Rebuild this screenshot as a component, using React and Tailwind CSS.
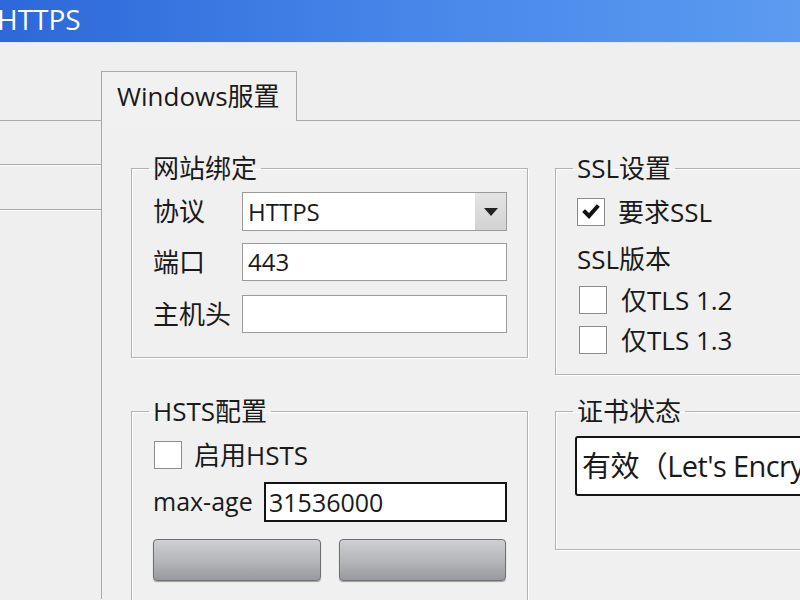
import React from 'react';

const font = { fontFamily: '"Open Sans", "Noto Sans CJK SC", sans-serif' };

function CheckBox({ checked }) {
  return (
    <span className="flex h-[28px] w-[28px] shrink-0 items-center justify-center border border-[#8c8c8c] bg-white">
      {checked && (
        <svg width="22" height="22" viewBox="0 0 22 22">
          <polyline points="5,11 9,15 17,6" fill="none" stroke="#111" strokeWidth="4" strokeLinecap="square" />
        </svg>
      )}
    </span>
  );
}

function Group({ title, className, children }) {
  return (
    <fieldset className={`border border-[#b2b2b2] pl-[21px] pr-[20px] shadow-[inset_1px_1px_0_#fff,1px_1px_0_#fff] ${className}`}>
      <legend className="-ml-[4px] px-[4px] text-[26px] leading-[30px] text-[#1a1a1a]">{title}</legend>
      {children}
    </fieldset>
  );
}

export default function App() {
  return (
    <div className="h-[600px] w-[800px] overflow-hidden bg-[#efefef] text-[#1a1a1a]" style={font}>
      {/* title bar */}
      <div className="flex h-[42px] items-center bg-gradient-to-r from-[#2c68d8] via-[#4785e9] to-[#5c9bf0]">
        <span className="-ml-[3px] -mt-[4px] text-[28px] leading-[36px] text-white">HTTPS</span>
      </div>
      <div className="h-px bg-[#dce8f8]" />

      {/* tab strip */}
      <div className="flex h-[78px] items-end border-b border-[#a9a9a9] pl-[101px]">
        <div className="-mb-px h-[50px] w-[196px] border border-b-0 border-[#a9a9a9] bg-[#f1f1f1] pl-[15px] pt-[7px] text-[26px] leading-[34px]">
          Windows服置
        </div>
      </div>

      <div className="flex h-[478px]">
        {/* left list */}
        <div className="w-[101px] shrink-0">
          <div className="h-[44px] border-b border-[#a9a9a9] shadow-[0_1px_0_#fff]" />
          <div className="h-[45px] border-b border-[#a9a9a9] shadow-[0_1px_0_#fff]" />
        </div>

        {/* tab panel */}
        <div className="flex-1 border-l border-[#a9a9a9] bg-[#f0f0f0] pl-[29px] pt-[32px]">
          <div className="grid grid-cols-[396px_300px] grid-rows-[243px_auto] items-start gap-x-[28px]">
            <Group title="网站绑定" className="h-[205px]">
              <div className="mt-[9px] flex h-[39px] items-center">
                <span className="w-[89px] text-[26px]">协议</span>
                <div className="flex h-[39px] w-[265px] border border-[#9b9b9b] bg-white">
                  <span className="flex-1 pl-[5px] text-[24px] leading-[37px]">HTTPS</span>
                  <span className="flex w-[31px] items-center justify-center bg-gradient-to-b from-[#e4e4e4] to-[#d2d2d2]">
                    <svg width="16" height="10" viewBox="0 0 16 10">
                      <polygon points="1,1 15,1 8,9" fill="#222" />
                    </svg>
                  </span>
                </div>
              </div>
              <div className="mt-[12px] flex h-[38px] items-center">
                <span className="w-[89px] text-[26px]">端口</span>
                <div className="h-[38px] w-[265px] border border-[#9b9b9b] bg-white pl-[5px] text-[24px] leading-[36px]">443</div>
              </div>
              <div className="mt-[14px] flex h-[38px] items-center">
                <span className="w-[89px] text-[26px]">主机头</span>
                <div className="h-[38px] w-[265px] border border-[#9b9b9b] bg-white" />
              </div>
            </Group>

            <Group title="SSL设置" className="h-[222px]">
              <div className="mt-[11px] flex h-[36px] items-center gap-[13px] text-[26px]">
                <CheckBox checked />
                <span>要求SSL</span>
              </div>
              <div className="mt-[11px] flex h-[36px] items-center text-[26px]">SSL版本</div>
              <div className="mt-[5px] flex h-[36px] items-center gap-[14px] pl-[2px] text-[26px]">
                <CheckBox />
                <span>仅TLS 1.2</span>
              </div>
              <div className="mt-[4px] flex h-[36px] items-center gap-[14px] pl-[2px] text-[26px]">
                <CheckBox />
                <span>仅TLS 1.3</span>
              </div>
            </Group>

            <Group title="HSTS配置" className="h-[240px]">
              <div className="mt-[11px] flex h-[36px] items-center gap-[12px] pl-px text-[26px]">
                <CheckBox />
                <span>启用HSTS</span>
              </div>
              <div className="mt-[9px] flex h-[40px] items-center">
                <span className="w-[111px] text-[25px]">max-age</span>
                <div className="h-[40px] w-[243px] border-2 border-[#141414] bg-white pl-[3px] text-[25px] leading-[36px]">31536000</div>
              </div>
              <div className="mt-[17px] flex gap-[18px]">
                <div className="h-[42px] w-[168px] rounded-[4px] border border-[#6f7074] bg-gradient-to-b from-[#cfd0d3] via-[#b6b7bb] to-[#98999e] shadow-[0_1px_1px_rgba(0,0,0,0.35)]" />
                <div className="h-[42px] w-[167px] rounded-[4px] border border-[#6f7074] bg-gradient-to-b from-[#cfd0d3] via-[#b6b7bb] to-[#98999e] shadow-[0_1px_1px_rgba(0,0,0,0.35)]" />
              </div>
            </Group>

            <Group title="证书状态" className="h-[154px]">
              <div className="-ml-[2px] mt-[10px] h-[60px] w-[320px] overflow-hidden whitespace-nowrap rounded-[3px] border-2 border-[#141414] bg-white pl-[5px] text-[29px] leading-[56px] tracking-[-0.6px]">
                有效（Let's Encrypt）
              </div>
            </Group>
          </div>
        </div>
      </div>
    </div>
  );
}
